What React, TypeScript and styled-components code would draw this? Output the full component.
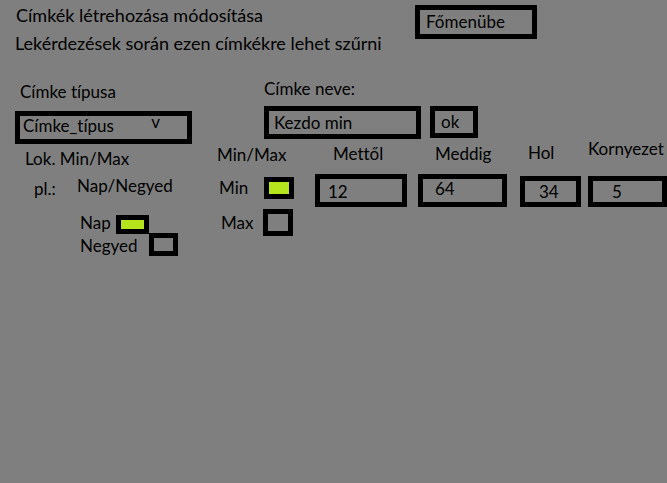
import React, { useState } from "react";
import styled, { createGlobalStyle } from "styled-components";

const GlobalStyle = createGlobalStyle`
  * { box-sizing: border-box; }
  html { background: #7f7f7f; }
  body { margin: 0; background: #7f7f7f; }
  body, button, input, select {
    font-family: Lato, Carlito, Calibri, sans-serif;
    font-size: 17px;
    line-height: 20px;
    font-variant-ligatures: none;
    color: #000;
  }
`;

const Page = styled.main`
  padding: 5px 0 24px 15px;
`;

const Header = styled.header`
  display: flex;
  align-items: flex-start;
`;

const Intro = styled.div`
  flex: 0 1 400px;
  font-size: 18px;
  white-space: nowrap;
`;

const Line = styled.p`
  margin: 0;
  line-height: 28px;
`;

const Title = styled.h1`
  margin: 0;
  padding: 0 0 4px 1px;
  font-size: inherit;
  font-weight: 400;
  line-height: 20px;
`;

const FrameButton = styled.button<{ $width: number; $height: number }>`
  width: ${(p) => p.$width}px;
  height: ${(p) => p.$height}px;
  padding: 0 0 0 6px;
  border: 5px solid #000;
  border-radius: 0;
  background: transparent;
  text-align: left;
  cursor: pointer;
`;

const Body = styled.div`
  display: flex;
  align-items: flex-start;
  padding-top: 22px;
`;

const TypeColumn = styled.section`
  flex: 0 0 202px;
  padding-top: 3px;
`;

const ValueColumn = styled.section`
  flex: 1;
  min-width: 0;
`;

const TypeLabel = styled.label`
  display: block;
  padding: 0 0 9px 5px;
`;

const SelectFrame = styled.div`
  position: relative;
  width: 177px;
`;

const Select = styled.select`
  display: block;
  appearance: none;
  width: 100%;
  height: 33px;
  padding: 0 0 4px 3px;
  border: 5px solid #000;
  border-radius: 0;
  background: transparent;
`;

const Arrow = styled.span`
  position: absolute;
  top: 1px;
  right: 32px;
  pointer-events: none;
`;

const Caption = styled.div`
  padding: 5px 0 0 10px;
`;

const Example = styled.div`
  display: flex;
  align-items: flex-end;
  padding: 7px 0 0 19px;
`;

const ExamplePrefix = styled.span`
  flex: 0 0 43px;
`;

const ExampleText = styled.span`
  padding-bottom: 3px;
`;

const Options = styled.div`
  padding: 16px 0 0 65px;
`;

const Option = styled.div<{ $labelWidth: number; $height: number }>`
  display: flex;
  height: ${(p) => p.$height}px;

  label {
    flex: 0 0 ${(p) => p.$labelWidth}px;
    align-self: flex-end;
  }
`;

const Check = styled.input.attrs({ type: "checkbox" })<{ $width: number; $height: number }>`
  appearance: none;
  flex: none;
  width: ${(p) => p.$width}px;
  height: ${(p) => p.$height}px;
  margin: 0;
  border: 5px solid #000;
  cursor: pointer;

  &:checked { background: #b5e61d; }
`;

const NameField = styled.div`
  padding-left: 47px;

  label { display: block; padding-bottom: 7px; }
`;

const NameRow = styled.div`
  display: flex;
  gap: 9px;
`;

const TextInput = styled.input<{ $indent: number; $top?: number; $bottom?: number }>`
  display: block;
  min-width: 0;
  height: 33px;
  padding: ${(p) => p.$top ?? 0}px 0 ${(p) => p.$bottom ?? 0}px ${(p) => p.$indent}px;
  border: 5px solid #000;
  border-radius: 0;
  background: transparent;
`;

const NameInput = styled(TextInput)`
  flex: 0 1 157px;
`;

const Settings = styled.div`
  display: flex;
  padding-top: 6px;
`;

const Extremes = styled.fieldset`
  flex: 0 0 98px;
  min-width: 0;
  margin: 0;
  padding: 0;
  border: 0;

  legend { padding: 0; }
`;

const Extreme = styled.div<{ $above: number; $indent: number; $label: number }>`
  display: flex;
  align-items: center;
  padding: ${(p) => p.$above}px 0 0 ${(p) => p.$indent}px;

  label { flex: 0 0 ${(p) => p.$label}px; }
`;

const Numbers = styled.div`
  flex: 1;
  display: grid;
  grid-template-columns: 103fr 102fr 68fr 79fr;
`;

const NumberField = styled.div<{ $after: number; $indent: number; $below: number }>`
  display: flex;
  flex-direction: column;
  justify-content: flex-end;
  height: 62px;
  padding-right: ${(p) => p.$after}px;

  label {
    padding: 0 0 ${(p) => p.$below}px ${(p) => p.$indent}px;
    white-space: nowrap;
  }
`;

const NumberInput = styled(TextInput)`
  width: 100%;
`;

const numberFields = [
  { id: "from", label: "Mettől", value: "12", after: 11, indent: 18, below: 10, text: 8, top: 2, bottom: 0 },
  { id: "to", label: "Meddig", value: "64", after: 13, indent: 17, below: 10, text: 12, top: 0, bottom: 4 },
  { id: "where", label: "Hol", value: "34", after: 7, indent: 8, below: 13, text: 14, top: 0, bottom: 0 },
  { id: "around", label: "Kornyezet", value: "5", after: 0, indent: 0, below: 17, text: 19, top: 0, bottom: 0 },
];

export default function App() {
  const [period, setPeriod] = useState("nap");
  const [extreme, setExtreme] = useState("min");

  return (
    <Page>
      <GlobalStyle />
      <Header>
        <Intro>
          <Title>Címkék létrehozása módosítása</Title>
          <Line>Lekérdezések során ezen címkékre lehet szűrni</Line>
        </Intro>
        <FrameButton type="button" $width={122} $height={34}>Főmenübe</FrameButton>
      </Header>
      <Body>
        <TypeColumn>
          <TypeLabel htmlFor="type">Címke típusa</TypeLabel>
          <SelectFrame>
            <Select id="type" defaultValue="tipus">
              <option value="tipus">Címke_típus</option>
            </Select>
            <Arrow aria-hidden="true">v</Arrow>
          </SelectFrame>
          <Caption>Lok. Min/Max</Caption>
          <Example>
            <ExamplePrefix>pl.:</ExamplePrefix>
            <ExampleText>Nap/Negyed</ExampleText>
          </Example>
          <Options>
            <Option $labelWidth={36} $height={18}>
              <label htmlFor="nap">Nap</label>
              <Check id="nap" $width={33} $height={19} checked={period === "nap"} onChange={() => setPeriod("nap")} />
            </Option>
            <Option $labelWidth={69} $height={23}>
              <label htmlFor="negyed">Negyed</label>
              <Check id="negyed" $width={29} $height={23} checked={period === "negyed"} onChange={() => setPeriod("negyed")} />
            </Option>
          </Options>
        </TypeColumn>
        <ValueColumn>
          <NameField>
            <label htmlFor="name">Címke neve:</label>
            <NameRow>
              <NameInput id="name" $indent={5} defaultValue="Kezdo min" />
              <FrameButton type="button" $width={48} $height={32}>ok</FrameButton>
            </NameRow>
          </NameField>
          <Settings>
            <Extremes>
              <legend>Min/Max</legend>
              <Extreme $above={12} $indent={2} $label={45}>
                <label htmlFor="min">Min</label>
                <Check id="min" $width={30} $height={22} checked={extreme === "min"} onChange={() => setExtreme("min")} />
              </Extreme>
              <Extreme $above={10} $indent={4} $label={42}>
                <label htmlFor="max">Max</label>
                <Check id="max" $width={30} $height={27} checked={extreme === "max"} onChange={() => setExtreme("max")} />
              </Extreme>
            </Extremes>
            <Numbers>
              {numberFields.map((f) => (
                <NumberField key={f.id} $after={f.after} $indent={f.indent} $below={f.below}>
                  <label htmlFor={f.id}>{f.label}</label>
                  <NumberInput
                    id={f.id}
                    inputMode="numeric"
                    $indent={f.text}
                    $top={f.top}
                    $bottom={f.bottom}
                    defaultValue={f.value}
                  />
                </NumberField>
              ))}
            </Numbers>
          </Settings>
        </ValueColumn>
      </Body>
    </Page>
  );
}
